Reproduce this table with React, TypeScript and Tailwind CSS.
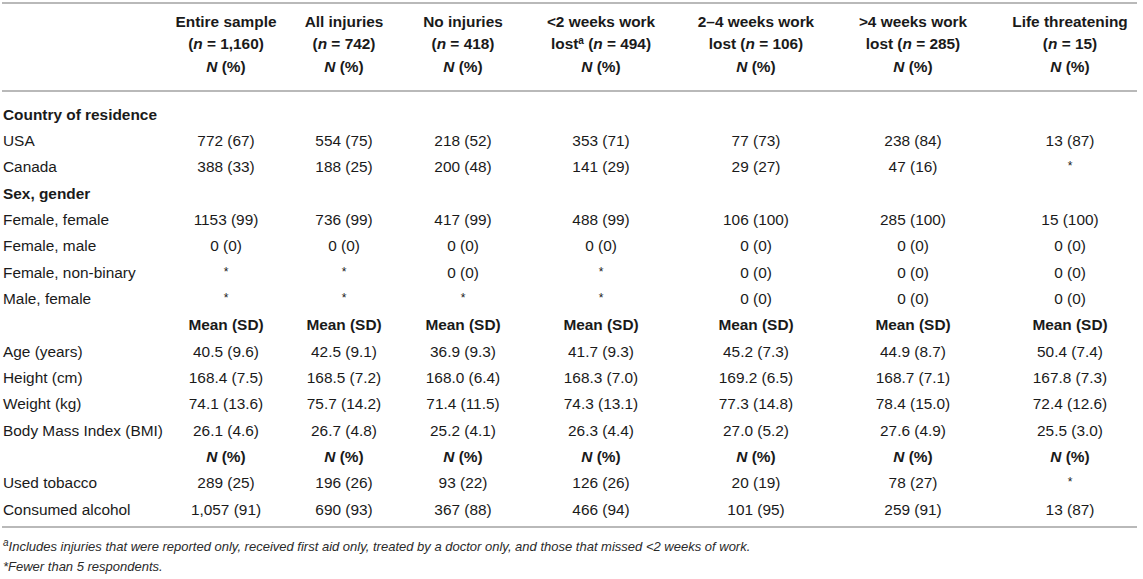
import React from "react";

const COLS = "grid grid-cols-[170px_108px_128px_110px_166px_144px_170px_144px]";

type Row =
  | { kind: "section"; label: string }
  | { kind: "data"; label: string; values: string[] }
  | { kind: "mean" }
  | { kind: "npct" };

const rows: Row[] = [
  { kind: "section", label: "Country of residence" },
  { kind: "data", label: "USA", values: ["772 (67)", "554 (75)", "218 (52)", "353 (71)", "77 (73)", "238 (84)", "13 (87)"] },
  { kind: "data", label: "Canada", values: ["388 (33)", "188 (25)", "200 (48)", "141 (29)", "29 (27)", "47 (16)", "*"] },
  { kind: "section", label: "Sex, gender" },
  { kind: "data", label: "Female, female", values: ["1153 (99)", "736 (99)", "417 (99)", "488 (99)", "106 (100)", "285 (100)", "15 (100)"] },
  { kind: "data", label: "Female, male", values: ["0 (0)", "0 (0)", "0 (0)", "0 (0)", "0 (0)", "0 (0)", "0 (0)"] },
  { kind: "data", label: "Female, non-binary", values: ["*", "*", "0 (0)", "*", "0 (0)", "0 (0)", "0 (0)"] },
  { kind: "data", label: "Male, female", values: ["*", "*", "*", "*", "0 (0)", "0 (0)", "0 (0)"] },
  { kind: "mean" },
  { kind: "data", label: "Age (years)", values: ["40.5 (9.6)", "42.5 (9.1)", "36.9 (9.3)", "41.7 (9.3)", "45.2 (7.3)", "44.9 (8.7)", "50.4 (7.4)"] },
  { kind: "data", label: "Height (cm)", values: ["168.4 (7.5)", "168.5 (7.2)", "168.0 (6.4)", "168.3 (7.0)", "169.2 (6.5)", "168.7 (7.1)", "167.8 (7.3)"] },
  { kind: "data", label: "Weight (kg)", values: ["74.1 (13.6)", "75.7 (14.2)", "71.4 (11.5)", "74.3 (13.1)", "77.3 (14.8)", "78.4 (15.0)", "72.4 (12.6)"] },
  { kind: "data", label: "Body Mass Index (BMI)", values: ["26.1 (4.6)", "26.7 (4.8)", "25.2 (4.1)", "26.3 (4.4)", "27.0 (5.2)", "27.6 (4.9)", "25.5 (3.0)"] },
  { kind: "npct" },
  { kind: "data", label: "Used tobacco", values: ["289 (25)", "196 (26)", "93 (22)", "126 (26)", "20 (19)", "78 (27)", "*"] },
  { kind: "data", label: "Consumed alcohol", values: ["1,057 (91)", "690 (93)", "367 (88)", "466 (94)", "101 (95)", "259 (91)", "13 (87)"] },
];

const NPct = () => (
  <span className="font-bold">
    <i>N</i> (%)
  </span>
);

const Star = () => <span className="text-[12px] relative top-[-2px]">*</span>;

const headers: React.ReactNode[][] = [
  [<>Entire sample</>, <>(<i>n</i> = 1,160)</>],
  [<>All injuries</>, <>(<i>n</i> = 742)</>],
  [<>No injuries</>, <>(<i>n</i> = 418)</>],
  [<>&lt;2 weeks work</>, <>lost<sup className="text-[10px] font-bold">a</sup> (<i>n</i> = 494)</>],
  [<>2–4 weeks work</>, <>lost (<i>n</i> = 106)</>],
  [<>&gt;4 weeks work</>, <>lost (<i>n</i> = 285)</>],
  [<>Life threatening</>, <>(<i>n</i> = 15)</>],
];

const Rule = () => <div className="h-[2px] w-[1135px] bg-[#b9b9b9]" />;

export default function App() {
  return (
    <div className="bg-white w-[1143px] h-[579px] overflow-hidden text-[#1a1a1a] font-[family-name:'Liberation_Sans',Arial,sans-serif] text-[15.4px]">
      <div className="pl-[2px] pt-[2px]">
        <Rule />
        {/* Header */}
        <div className="pt-[7px] pb-[12px]">
          <div className={COLS}>
            <div />
            {headers.map((h, i) => (
              <div key={i} className="text-center font-bold leading-[21.6px] whitespace-nowrap">
                <div>{h[0]}</div>
                <div>{h[1]}</div>
              </div>
            ))}
          </div>
          <div className={COLS + " mt-[2px]"}>
            <div />
            {headers.map((_, i) => (
              <div key={i} className="text-center leading-[21.6px]">
                <NPct />
              </div>
            ))}
          </div>
        </div>
        <Rule />
        {/* Body */}
        <div className="pt-[10px] pb-[3px]">
          {rows.map((r, idx) => {
            if (r.kind === "section") {
              return (
                <div key={idx} className={COLS + " h-[26.33px] leading-[26.33px]"}>
                  <div className="pl-[1px] font-bold whitespace-nowrap col-span-2">{r.label}</div>
                </div>
              );
            }
            if (r.kind === "mean" || r.kind === "npct") {
              return (
                <div key={idx} className={COLS + " h-[26.33px] leading-[26.33px]"}>
                  <div />
                  {Array.from({ length: 7 }).map((_, i) => (
                    <div key={i} className="text-center font-bold">
                      {r.kind === "mean" ? "Mean (SD)" : <NPct />}
                    </div>
                  ))}
                </div>
              );
            }
            return (
              <div key={idx} className={COLS + " h-[26.33px] leading-[26.33px]"}>
                <div className="pl-[1px] whitespace-nowrap">{r.label}</div>
                {r.values.map((v, i) => (
                  <div key={i} className="text-center whitespace-nowrap">
                    {v === "*" ? <Star /> : v}
                  </div>
                ))}
              </div>
            );
          })}
        </div>
        <Rule />
        {/* Footnotes */}
        <div className="pt-[9px] pl-[1px] italic text-[13px] leading-[20px] text-[#2a2a2a]">
          <div>
            <sup className="text-[10px]">a</sup>Includes injuries that were reported only, received first aid only, treated by a doctor only, and those that missed &lt;2 weeks of work.
          </div>
          <div>*Fewer than 5 respondents.</div>
        </div>
      </div>
    </div>
  );
}
